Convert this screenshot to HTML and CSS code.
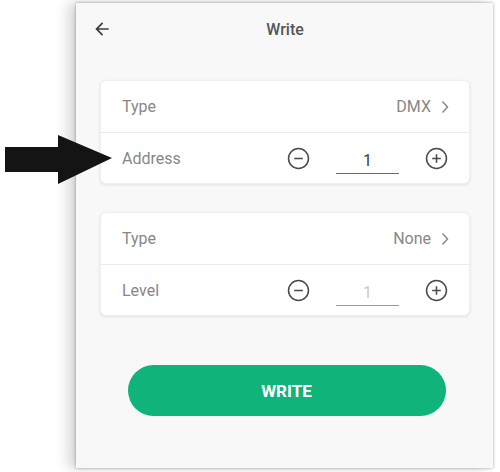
FILE: index.html
```html
<!DOCTYPE html>
<html>
<head>
<meta charset="utf-8">
<link rel="stylesheet" href="styles.css">
</head>
<body>
<div class="stage">
  <div class="phone">
    <header class="bar">
      <svg class="back" viewBox="0 0 24 24" width="20" height="20"><path d="M20 11H7.83l5.59-5.59L12 4l-8 8 8 8 1.41-1.41L7.83 13H20v-2z" fill="#3d3d3d"/></svg>
      <div class="title">Write</div>
    </header>

    <section class="card">
      <div class="row">
        <span class="label">Type</span>
        <span class="value">DMX</span>
        <svg class="chev" viewBox="0 0 8 14" width="8" height="14"><path d="M1.5 1.5 L6.5 7 L1.5 12.5" fill="none" stroke="#8a8a8a" stroke-width="1.5"/></svg>
      </div>
      <div class="row">
        <span class="label">Address</span>
        <svg class="ctl" viewBox="0 0 24 24" width="23" height="23"><circle cx="12" cy="12" r="10.4" fill="none" stroke="#4a4a4a" stroke-width="1.6"/><path d="M7.5 12h9" stroke="#4a4a4a" stroke-width="1.6"/></svg>
        <span class="num">1</span>
        <svg class="ctl" viewBox="0 0 24 24" width="23" height="23"><circle cx="12" cy="12" r="10.4" fill="none" stroke="#4a4a4a" stroke-width="1.6"/><path d="M7.5 12h9M12 7.5v9" stroke="#4a4a4a" stroke-width="1.6"/></svg>
      </div>
    </section>

    <section class="card">
      <div class="row">
        <span class="label">Type</span>
        <span class="value">None</span>
        <svg class="chev" viewBox="0 0 8 14" width="8" height="14"><path d="M1.5 1.5 L6.5 7 L1.5 12.5" fill="none" stroke="#8a8a8a" stroke-width="1.5"/></svg>
      </div>
      <div class="row">
        <span class="label">Level</span>
        <svg class="ctl" viewBox="0 0 24 24" width="23" height="23"><circle cx="12" cy="12" r="10.4" fill="none" stroke="#4a4a4a" stroke-width="1.6"/><path d="M7.5 12h9" stroke="#4a4a4a" stroke-width="1.6"/></svg>
        <span class="num dim">1</span>
        <svg class="ctl" viewBox="0 0 24 24" width="23" height="23"><circle cx="12" cy="12" r="10.4" fill="none" stroke="#4a4a4a" stroke-width="1.6"/><path d="M7.5 12h9M12 7.5v9" stroke="#4a4a4a" stroke-width="1.6"/></svg>
      </div>
    </section>

    <button class="write">WRITE</button>
  </div>

  <svg class="pointer" viewBox="0 0 107 49" width="107" height="49"><polygon points="0,12 53,12 53,0 107,23 53,49 53,37 0,37" fill="#141414"/></svg>
</div>
</body>
</html>
```

FILE: styles.css
```css
* { box-sizing: border-box; }
html, body { margin: 0; padding: 0; background: #ffffff; }
body { font-family: Roboto, "Noto Sans", Arial, sans-serif; }

.stage {
  position: relative;
  width: 500px;
  height: 472px;
  overflow: hidden;
  background: #ffffff;
  padding: 3px 0 0 76px;
}

.phone {
  width: 417px;
  height: 465px;
  background: #f8f8f8;
  box-shadow: -8px 0 12px rgba(0,0,0,0.16), 0 0 3px rgba(0,0,0,0.35);
  padding: 0 23px 0 24px;
  display: flex;
  flex-direction: column;
}

.bar {
  height: 52px;
  display: flex;
  align-items: center;
  justify-content: center;
  position: relative;
  margin: 0 -23px 25px -24px;
}
.back { position: absolute; left: 16px; top: 16px; }
.title { font-size: 16px; font-weight: 500; color: #565656; margin-left: 1px; }

.card {
  background: #ffffff;
  border-radius: 6px;
  box-shadow: 0 1px 3px rgba(0,0,0,0.10);
  border: 1px solid #efefef;
  margin-bottom: 28px;
}

.row {
  height: 51px;
  display: flex;
  align-items: center;
  padding: 0 21px 0 21px;
}
.row + .row { border-top: 1px solid #ececec; }

.label { flex: 1; font-size: 16px; color: #878787; }
.value { font-size: 16px; color: #878787; margin-right: 10px; }
.chev { margin-right: -1px; }

.ctl { display: block; }
.num {
  width: 63px;
  margin: 0 26px 0 26px;
  text-align: center;
  font-size: 16px;
  color: #3c3c3c;
  border-bottom: 1px solid #6a6a6a;
  padding: 0 0 3px 0;
  position: relative;
  top: 4px;
}
.num.dim { color: #c8c8c8; border-bottom-color: #9a9a9a; }

.write {
  align-self: center;
  margin-top: 21px;
  margin-left: 3px;
  width: 318px;
  height: 51px;
  border: none;
  border-radius: 26px;
  background: #10b37a;
  color: #ffffff;
  font-family: Roboto, "Noto Sans", Arial, sans-serif;
  font-size: 17px;
  font-weight: 700;
}

.pointer { position: absolute; left: 5px; top: 135px; }
```
